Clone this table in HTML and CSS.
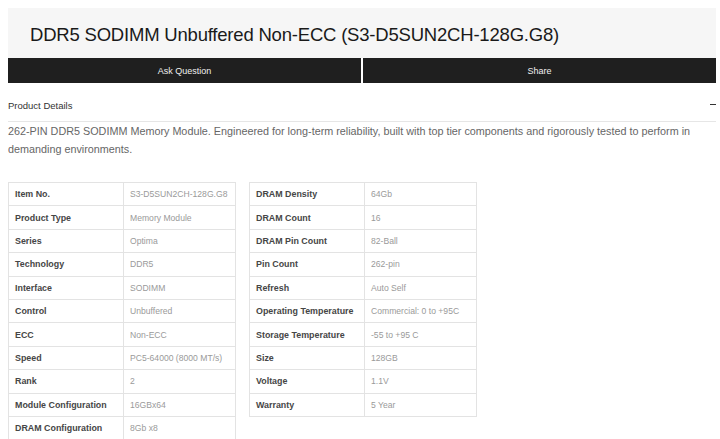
FILE: index.html
```html
<!DOCTYPE html>
<html>
<head>
<meta charset="utf-8">
<link rel="stylesheet" href="styles.css">
</head>
<body>
<div class="page">
  <div class="title-band">
    <h1 class="title">DDR5 SODIMM Unbuffered Non-ECC (S3-D5SUN2CH-128G.G8)</h1>
  </div>
  <div class="actions">
    <div class="btn">Ask Question</div>
    <div class="btn">Share</div>
  </div>
  <div class="details-head">
    <span class="details-label">Product Details</span>
    <span class="minus"></span>
  </div>
  <p class="desc">262-PIN DDR5 SODIMM Memory Module. Engineered for long-term reliability, built with top tier components and rigorously tested to perform in demanding environments.</p>
  <div class="tables">
    <table class="spec">
      <tr><th>Item No.</th><td>S3-D5SUN2CH-128G.G8</td></tr>
      <tr><th>Product Type</th><td>Memory Module</td></tr>
      <tr><th>Series</th><td>Optima</td></tr>
      <tr><th>Technology</th><td>DDR5</td></tr>
      <tr><th>Interface</th><td>SODIMM</td></tr>
      <tr><th>Control</th><td>Unbuffered</td></tr>
      <tr><th>ECC</th><td>Non-ECC</td></tr>
      <tr><th>Speed</th><td>PC5-64000 (8000 MT/s)</td></tr>
      <tr><th>Rank</th><td>2</td></tr>
      <tr><th>Module Configuration</th><td>16GBx64</td></tr>
      <tr><th>DRAM Configuration</th><td>8Gb x8</td></tr>
    </table>
    <table class="spec">
      <tr><th>DRAM Density</th><td>64Gb</td></tr>
      <tr><th>DRAM Count</th><td>16</td></tr>
      <tr><th>DRAM Pin Count</th><td>82-Ball</td></tr>
      <tr><th>Pin Count</th><td>262-pin</td></tr>
      <tr><th>Refresh</th><td>Auto Self</td></tr>
      <tr><th>Operating Temperature</th><td>Commercial: 0 to +95C</td></tr>
      <tr><th>Storage Temperature</th><td>-55 to +95 C</td></tr>
      <tr><th>Size</th><td>128GB</td></tr>
      <tr><th>Voltage</th><td>1.1V</td></tr>
      <tr><th>Warranty</th><td>5 Year</td></tr>
    </table>
  </div>
</div>
</body>
</html>
```

FILE: styles.css
```css
html, body {
  margin: 0;
  padding: 0;
  background: #ffffff;
}
body {
  padding: 8px 4px 0 8px;
  font-family: "Liberation Sans", Arial, sans-serif;
  overflow: hidden;
}
.page {
  width: 708px;
}
.title-band {
  background: #f6f6f6;
  height: 50px;
  display: flex;
  align-items: center;
  padding-left: 22px;
}
.title {
  margin: 0;
  font-family: "Liberation Sans", Arial, sans-serif;
  font-weight: 400;
  font-size: 18.5px;
  color: #1a1a1a;
  letter-spacing: -0.2px;
  position: relative;
  top: 2px;
}
.actions {
  display: flex;
  gap: 2px;
  height: 25px;
}
.btn {
  flex: 1;
  background: #1f1f1f;
  color: #f0f0f0;
  font-size: 9px;
  display: flex;
  align-items: center;
  justify-content: center;
}
.details-head {
  display: flex;
  align-items: center;
  justify-content: space-between;
  height: 38px;
  border-bottom: 1px solid #e6e6e6;
}
.details-label {
  font-size: 9.5px;
  color: #333;
  position: relative;
  top: 3px;
}
.minus {
  width: 6px;
  height: 1px;
  background: #333;
  position: relative;
  top: 2px;
}
.desc {
  margin: 0;
  font-size: 10.8px;
  line-height: 18px;
  color: #666;
  width: 700px;
}
.tables {
  display: flex;
  align-items: flex-start;
  gap: 13px;
  margin-top: 24px;
}
.spec {
  border-collapse: collapse;
  width: 228px;
  table-layout: fixed;
}
.spec th, .spec td {
  border: 1px solid #e3e3e3;
  height: 22.4px;
  padding: 0 6px;
  font-size: 8.6px;
  text-align: left;
  white-space: nowrap;
}
.spec th {
  width: 102px;
  font-size: 8.9px;
  font-weight: 700;
  color: #464646;
}
.spec td {
  color: #9a9a9a;
}
```
